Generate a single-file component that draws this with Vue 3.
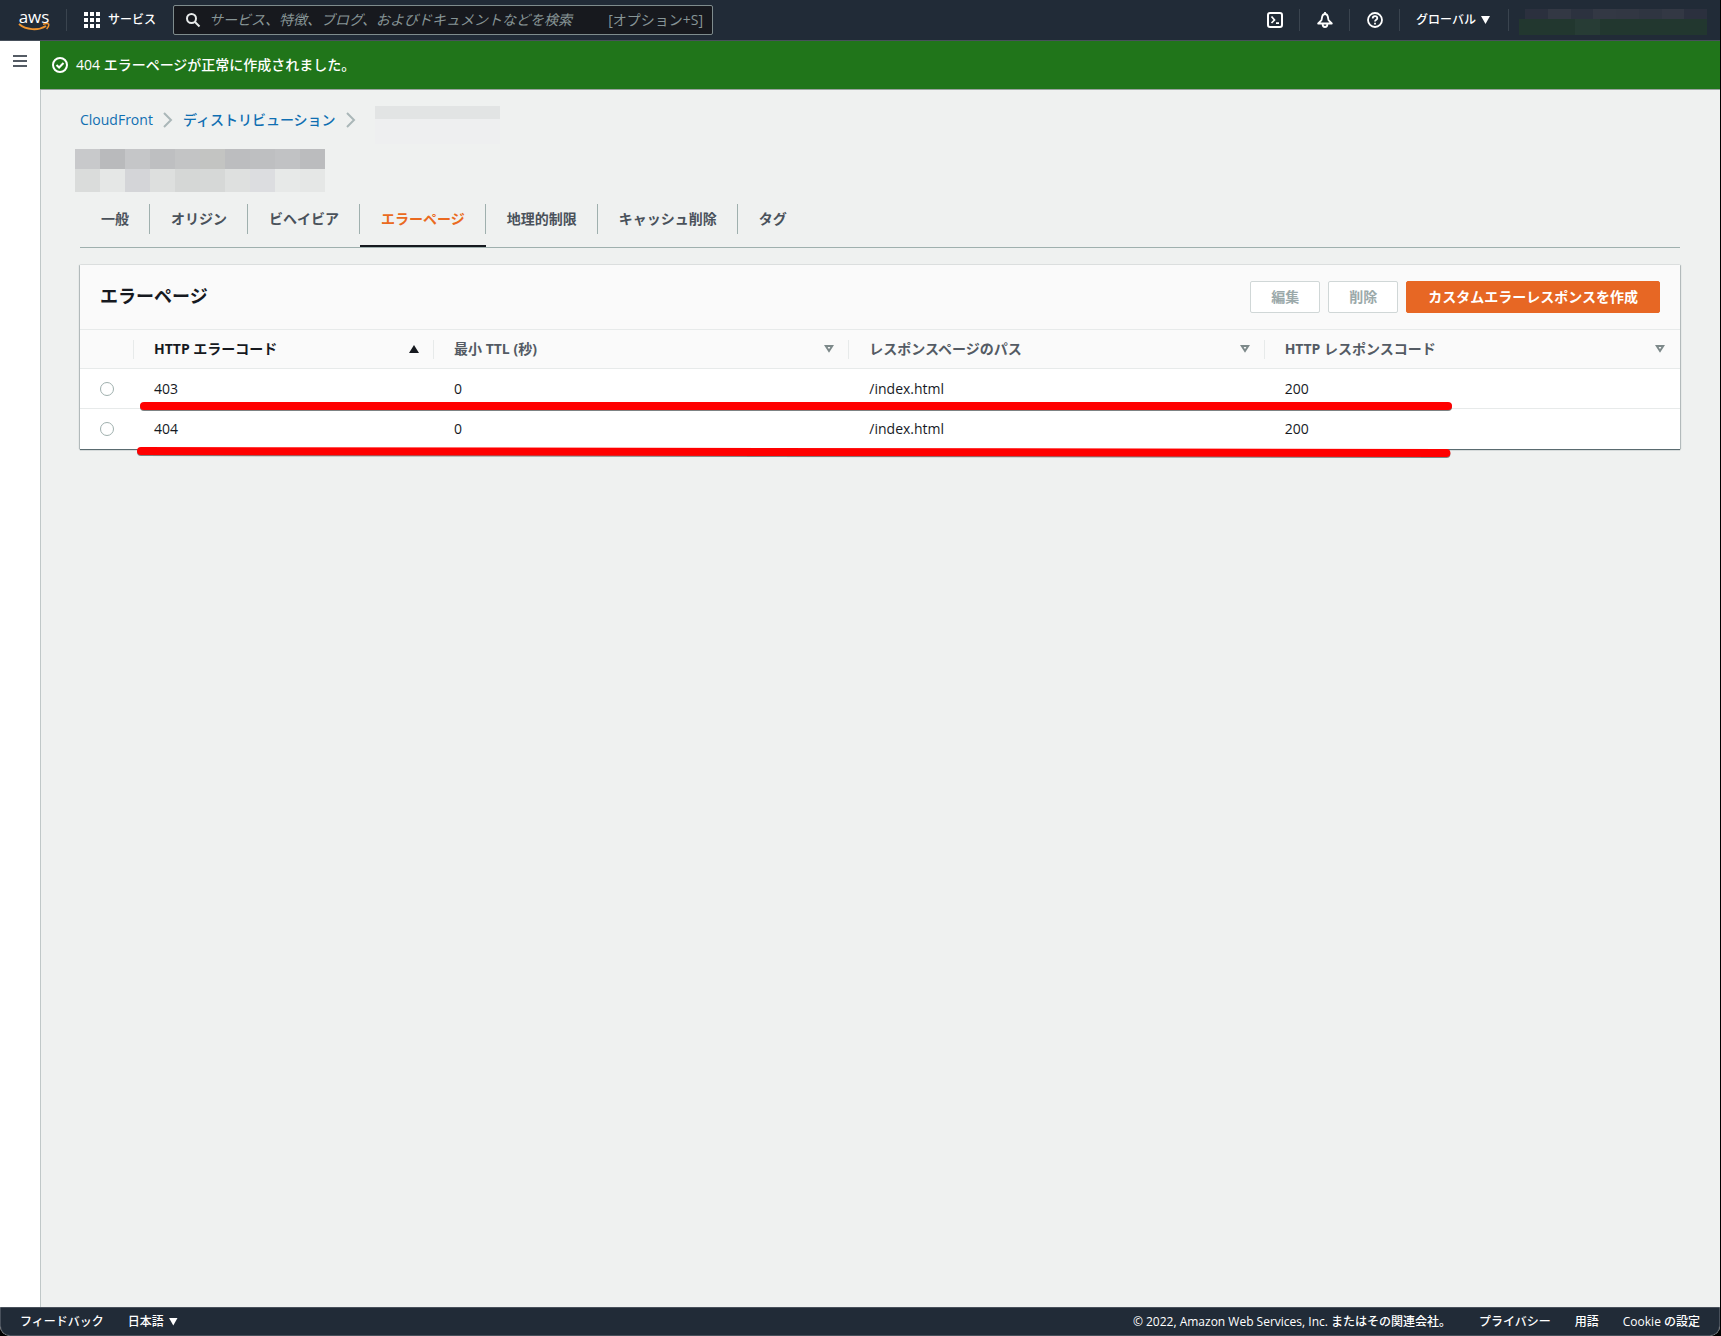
<script setup>
import { ref } from 'vue'

const tabs = ['一般', 'オリジン', 'ビヘイビア', 'エラーページ', '地理的制限', 'キャッシュ削除', 'タグ']
const activeTab = ref('エラーページ')

const columns = [
  { key: 'code', label: 'HTTP エラーコード', sorted: true },
  { key: 'ttl', label: '最小 TTL (秒)' },
  { key: 'path', label: 'レスポンスページのパス' },
  { key: 'response', label: 'HTTP レスポンスコード' },
]
const rows = [
  { code: '403', ttl: '0', path: '/index.html', response: '200' },
  { code: '404', ttl: '0', path: '/index.html', response: '200' },
]
const selected = ref(null)

const titleMask = [
  ['#c8c9cb', '#b9babc', '#c5c6c8', '#bebfc1', '#c3c4c5', '#c3c4c2', '#bcbdbf', '#bebfc1', '#c1c2c4', '#bbbcbe'],
  ['#dadcdb', '#e5e7e6', '#d4d5d8', '#dddfde', '#d5d7d6', '#d6d8d7', '#dee0df', '#dcdde0', '#e7e9e8', '#e5e7e6'],
]
const accountMask = ['#2b303e', '#333844', '#2c323f', '#333844', '#323743', '#2f3541', '#333844', '#2b303e']
</script>

<template>
  <div class="window">
    <header class="topbar">
      <a class="logo" href="#" aria-label="aws">
        <span class="logo-word">aws</span>
        <svg class="logo-smile" width="32" height="8" viewBox="0 0 32 8" fill="none" stroke="#f0942e" stroke-width="2">
          <path d="M1 1C8 7 20 8 28 3" />
          <path d="M25 1.2C28 .4 30 .6 30.6 1C31 2 30 4.600 28.600 6" stroke-width="1.500" />
        </svg>
      </a>
      <i class="rule"></i>
      <button class="services" type="button">
        <svg width="16" height="16" viewBox="0 0 16 16" fill="#fff">
          <path d="M0 0h4v4H0zM6 0h4v4H6zM12 0h4v4h-4zM0 6h4v4H0zM6 6h4v4H6zM12 6h4v4h-4zM0 12h4v4H0zM6 12h4v4H6zM12 12h4v4h-4z" />
        </svg>
        サービス
      </button>
      <label class="search">
        <svg width="16" height="16" viewBox="0 0 16 16" fill="none" stroke="#e8ebeb" stroke-width="2">
          <circle cx="6.500" cy="6.500" r="4.500" /><path d="M10 10l4.500 4.500" />
        </svg>
        <input type="text" aria-label="検索" placeholder="サービス、特徴、ブログ、およびドキュメントなどを検索" />
        <span>[オプション+S]</span>
      </label>
      <nav class="tools">
        <button type="button" class="tool" aria-label="CloudShell">
          <svg width="16" height="16" viewBox="0 0 16 16" fill="none" stroke="#fff" stroke-width="2">
            <rect x="1" y="1" width="14" height="14" rx="2" /><path d="M4.500 4.500L7.500 8L4.500 11M9 11.200h3" stroke-width="1.700" />
          </svg>
        </button>
        <i class="rule"></i>
        <button type="button" class="tool" aria-label="通知">
          <svg width="16" height="16" viewBox="0 0 16 16" fill="none" stroke="#fff" stroke-width="1.800" stroke-linejoin="round">
            <path d="M8 0v2M1.200 11.500h13.600L11.500 8.200L10.800 4.500C10.300 2.800 9.500 2 8 2S5.700 2.800 5.200 4.500L4.500 8.200zM5.600 12c0 2 .9 3 2.400 3s2.400-1 2.400-3" />
          </svg>
        </button>
        <i class="rule"></i>
        <button type="button" class="tool" aria-label="ヘルプ">
          <svg width="16" height="16" viewBox="0 0 16 16" fill="none" stroke="#fff" stroke-width="1.800">
            <circle cx="8" cy="8" r="7" /><path d="M5.700 6.500C5.700 4.900 6.700 4.100 8 4.100S10.300 5 10.300 6.200C10.300 7.700 8 7.700 8 9.500M8 10.800v1.600" />
          </svg>
        </button>
        <i class="rule"></i>
        <button type="button" class="region">グローバル<i class="caret"></i></button>
        <i class="rule"></i>
        <div class="account">
          <div class="account-name"><i v-for="(c, i) in accountMask" :key="i" :style="{ background: c }"></i></div>
          <div class="account-id"><i></i></div>
        </div>
      </nav>
    </header>

    <div class="body">
      <aside class="side">
        <button type="button" aria-label="メニュー">
          <svg width="14" height="12" viewBox="0 0 14 12" fill="#545b64"><path d="M0 0h14v2H0zM0 5h14v2H0zM0 10h14v2H0z" /></svg>
        </button>
      </aside>
      <main class="main">
        <div class="flash" role="status">
          <svg width="16" height="16" viewBox="0 0 16 16" fill="none" stroke="#fff" stroke-width="2">
            <circle cx="8" cy="8" r="7" /><path d="M4.500 8l2.600 2.500L11.500 6" />
          </svg>
          404 エラーページが正常に作成されました。
        </div>
        <div class="content">
          <nav class="crumbs">
            <a href="#">CloudFront</a>
            <svg width="10" height="16" viewBox="0 0 10 16" fill="none" stroke="#aab7b8" stroke-width="2"><path d="M1 1l7 7l-7 7" /></svg>
            <a href="#">ディストリビューション</a>
            <svg width="10" height="16" viewBox="0 0 10 16" fill="none" stroke="#aab7b8" stroke-width="2"><path d="M1 1l7 7l-7 7" /></svg>
            <div class="crumb-mask"><i></i><i></i></div>
          </nav>
          <div class="title-mask">
            <div v-for="(line, r) in titleMask" :key="r">
              <i v-for="(c, i) in line" :key="i" :style="{ background: c }"></i>
            </div>
          </div>
          <div class="tabs" role="tablist">
            <button
              v-for="tab in tabs"
              :key="tab"
              type="button"
              role="tab"
              :aria-selected="tab === activeTab"
              :class="{ active: tab === activeTab }"
              @click="activeTab = tab"
            ><span>{{ tab }}</span></button>
          </div>

          <section class="card">
            <div class="card-head">
              <h2>エラーページ</h2>
              <button type="button" class="btn" disabled>編集</button>
              <button type="button" class="btn" disabled>削除</button>
              <button type="button" class="btn primary">カスタムエラーレスポンスを作成</button>
            </div>
            <table>
              <colgroup><col class="c-pick" /><col class="c-code" /><col /><col /><col /></colgroup>
              <thead>
                <tr>
                  <th><div class="cell"></div></th>
                  <th v-for="col in columns" :key="col.key" :class="{ sorted: col.sorted }">
                    <div class="cell">
                      {{ col.label }}
                      <svg v-if="col.sorted" width="10" height="8" viewBox="0 0 10 8" fill="#16191f"><path d="M5 0l5 8H0z" /></svg>
                      <svg v-else width="10" height="8" viewBox="0 0 10 8" fill="none" stroke="#7d898a" stroke-width="2"><path d="M1.800 1h6.400L5 6z" /></svg>
                    </div>
                  </th>
                </tr>
              </thead>
              <tbody>
                <tr v-for="row in rows" :key="row.code">
                  <td class="pick"><input v-model="selected" type="radio" name="page" :value="row.code" :aria-label="row.code" /></td>
                  <td v-for="col in columns" :key="col.key">{{ row[col.key] }}</td>
                </tr>
              </tbody>
            </table>
            <svg class="marks" stroke="#ff0000" stroke-width="8" stroke-linecap="round" aria-hidden="true">
              <line x1="64" y1="141" x2="85.500%" y2="141" />
              <line x1="61" y1="186" x2="85.400%" y2="188" />
            </svg>
          </section>
        </div>
      </main>
    </div>

    <footer class="footer">
      <a href="#">フィードバック</a>
      <button type="button">日本語<i class="caret"></i></button>
      <span class="copy">© 2022, Amazon Web Services, Inc. またはその関連会社。</span>
      <a href="#">プライバシー</a>
      <a href="#">用語</a>
      <a href="#">Cookie の設定</a>
    </footer>
  </div>
</template>

<style>
body {
  background: #000;
}
</style>

<style scoped>
* {
  box-sizing: border-box;
}
.window {
  display: flex;
  flex-direction: column;
  min-height: 100vh;
  margin-right: 1px;
  overflow: hidden;
  border-radius: 0 0 10px 10px;
  background: #eff1f0;
  color: #16191f;
  font: 14px/22px "Open Sans", "Noto Sans CJK JP", sans-serif;
}
button {
  padding: 0;
  border: 0;
  background: none;
  color: inherit;
  font: inherit;
  cursor: pointer;
}
a {
  color: inherit;
  text-decoration: none;
}
svg {
  display: block;
  flex: none;
}
i {
  display: block;
  flex: none;
}

.topbar {
  display: flex;
  align-items: center;
  height: 41px;
  border-bottom: 1px solid #48505b;
  background: #212b37;
  color: #fff;
  font-size: 12px;
  font-weight: 500;
}
.logo {
  width: 32px;
  margin: 0 16px 0 18px;
}
.logo-word {
  display: block;
  height: 13px;
  text-align: center;
  font: 500 17px/13px "Open Sans", sans-serif;
}
.rule {
  width: 1px;
  height: 22px;
  background: #3a444f;
}
.services {
  display: flex;
  align-items: center;
  gap: 8px;
  margin: 0 17px;
}
.search {
  display: flex;
  align-items: center;
  width: 540px;
  height: 30px;
  padding: 0 9px 0 11px;
  border: 1px solid #7f8c8d;
  border-radius: 2px;
  background: #17191e;
  color: #879596;
  font-size: 14px;
  font-weight: 400;
}
.search input {
  flex: 1;
  min-width: 0;
  margin-left: 8px;
  padding: 0;
  border: 0;
  outline: 0;
  background: none;
  color: #fff;
  font: inherit;
}
.search input::placeholder {
  color: #879596;
  font-style: italic;
}
.tools {
  display: flex;
  align-items: center;
  margin-left: auto;
}
.tool {
  display: flex;
  justify-content: center;
  width: 49px;
}
.region {
  display: flex;
  align-items: center;
  gap: 5px;
  margin: 0 18px 0 16px;
}
.caret {
  width: 9px;
  height: 8px;
  background: #fff;
  clip-path: polygon(0 0, 100% 0, 50% 100%);
}
.account {
  width: 188px;
  margin: 4px 13px 0 10px;
}
.account-name {
  display: flex;
  height: 10px;
  margin-left: 6px;
}
.account-name i {
  width: 25px;
  flex-shrink: 1;
}
.account-id {
  height: 16px;
  padding-left: 56px;
  background: #22372f;
}
.account-id i {
  width: 25px;
  height: 16px;
  background: #273c35;
}

.body {
  display: flex;
  flex: 1;
}
.side {
  width: 40px;
  padding: 14px 13px;
  background: #fff;
}
.side button {
  display: block;
}
.main {
  flex: 1;
  min-width: 0;
  border-left: 1px solid #c0c8c8;
}
.flash {
  display: flex;
  align-items: center;
  gap: 8px;
  height: 49px;
  margin-left: -1px;
  padding-left: 12px;
  border-bottom: 1px solid #9aa39f;
  background: #20751a;
  color: #fff;
  font-weight: 500;
}
.content {
  padding: 15px 40px 0 39px;
}
.crumbs {
  display: flex;
  gap: 10px;
  height: 44px;
  color: #0f6fb2;
  font-weight: 500;
}
.crumbs svg {
  margin-top: 7px;
}
.crumbs a {
  line-height: 30px;
}
.crumb-mask {
  width: 125px;
  margin: 1px 0 0 9px;
}
.crumb-mask i:first-child {
  height: 13px;
  background: #e2e4e4;
}
.crumb-mask i:last-child {
  height: 25px;
  background: #eeeff0;
}
.title-mask {
  margin-left: -5px;
}
.title-mask div {
  display: flex;
}
.title-mask i {
  width: 25px;
  height: 20px;
}
.title-mask div:last-child i {
  height: 23px;
}
.tabs {
  display: flex;
  height: 56px;
  border-bottom: 1px solid #9fb0ae;
  color: #4a525b;
  font-weight: 700;
}
.tabs button {
  display: flex;
  align-items: flex-start;
  padding-top: 12px;
  border-bottom: 2px solid transparent;
}
.tabs span {
  padding: 4px 20px 4px 21px;
  border-right: 1px solid #9fb0ae;
}
.tabs button:last-child span {
  border: 0;
}
.tabs .active {
  border-color: #16191f;
  color: #ea6a20;
}

.card {
  position: relative;
  margin-top: 17px;
  background: #fff;
  box-shadow: 0 1px 1px #5a6b70, 1px 0 1px #c4cbcb, -1px 0 1px #c4cbcb, 0 -1px 0 #e6e9e8;
}
.card-head {
  display: flex;
  align-items: center;
  gap: 8px;
  height: 64px;
  padding: 0 20px;
  background: #fafafa;
}
h2 {
  flex: 1;
  margin: 0 0 2px;
  font-size: 18px;
}
.btn {
  height: 32px;
  padding: 0 20px;
  border: 1px solid #d0d7d7;
  border-radius: 2px;
  background: #fff;
  color: #9ba9aa;
  font-weight: 700;
}
.btn.primary {
  padding: 0 21px;
  border-color: #e76724;
  background: #e76724;
  color: #fff;
}
table {
  width: 100%;
  border-collapse: separate;
  border-spacing: 0;
  table-layout: fixed;
  font-weight: 500;
}
.c-pick {
  width: 54px;
}
.c-code {
  width: 300px;
}
th {
  height: 40px;
  padding: 0;
  border-top: 1px solid #e7eaea;
  border-bottom: 1px solid #e7eaea;
  background: #fafafa;
  color: #545b64;
  font-weight: 700;
  text-align: left;
}
th.sorted {
  color: #16191f;
}
.cell {
  display: flex;
  align-items: center;
  justify-content: space-between;
  height: 19px;
  padding: 0 14px 0 20px;
  border-right: 1px solid #e7eaea;
}
th:last-child .cell {
  border-color: transparent;
}
td {
  height: 40px;
  padding: 0 20px;
  border-bottom: 1px solid #e7eaea;
}
tr:last-child td {
  border: 0;
}
.pick input {
  display: block;
  width: 14px;
  height: 14px;
  margin: 0;
  border: 1px solid #9fb0ae;
  border-radius: 50%;
  background: #fff;
  appearance: none;
}
.marks {
  position: absolute;
  inset: 0;
  width: 100%;
  height: 100%;
  overflow: visible;
  pointer-events: none;
  filter: drop-shadow(0 1px 0 #7d8384);
}

.footer {
  display: flex;
  align-items: center;
  gap: 24px;
  height: 29px;
  padding: 0 19px;
  border: 1px solid #48505b;
  border-radius: 0 0 10px 10px;
  background: #212b37;
  color: #fff;
  font-size: 12px;
  font-weight: 500;
}
.footer button {
  display: flex;
  align-items: center;
  gap: 5px;
}
.copy {
  margin: 0 4px 0 auto;
}
</style>
